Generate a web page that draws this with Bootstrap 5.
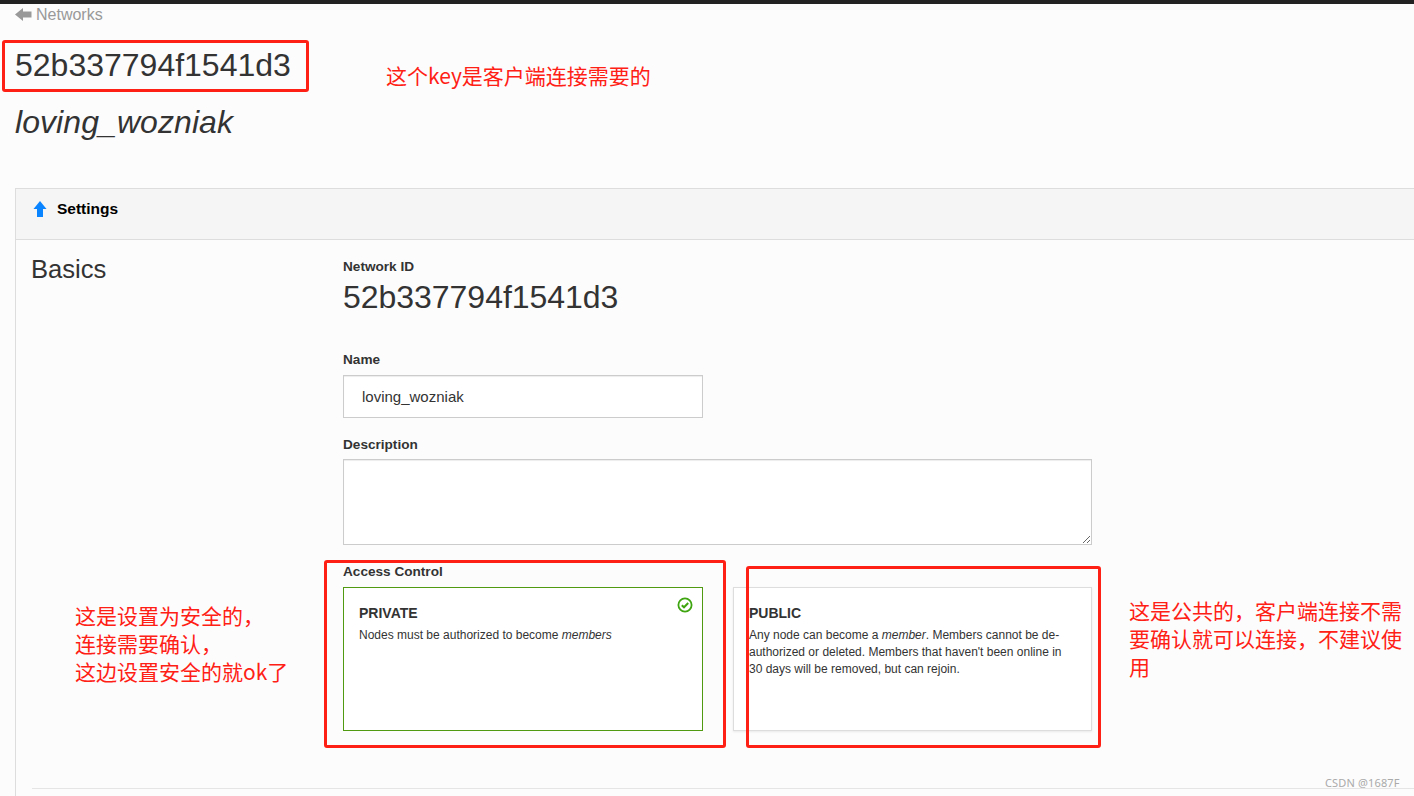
<!DOCTYPE html>
<html lang="en">
<head>
<meta charset="utf-8">
<title>Network</title>
<link rel="stylesheet" href="https://cdn.jsdelivr.net/npm/bootstrap@5.3.0/dist/css/bootstrap.min.css">
<style>
html,body{height:796px;overflow:hidden}
body{background:#fcfcfc;color:#333;font-family:"Liberation Sans",Arial,sans-serif;font-size:14px;line-height:1.42857;position:relative}
.topline{height:4px;background:#222}
.page-wrap{padding:0 0 0 15px}
.back-link{color:#999;font-size:16px;line-height:20px;height:20px;text-decoration:none;gap:4px}
.back-link span{padding-top:2px}
.net-id{font-size:32px;line-height:36px;font-weight:400;margin:23px 0 0}
.net-name{font-size:32px;line-height:36px;font-weight:400;font-style:italic;margin:21px 0 48px;letter-spacing:.07px}
.panel-box{width:1500px;border:1px solid #ddd;border-radius:0;background:transparent;height:700px}
.panel-head{height:51px;background:#f5f5f5;border-bottom:1px solid #ddd;padding:0 17px 10px;gap:10px;font-weight:700;font-size:15.5px;color:#000;border-radius:0}
.basics-title{font-size:25.6px;line-height:26px;font-weight:400;width:312px;flex:none;margin:16px 0 0;color:#333}
.panel-main{padding:0 0 0 15px}
.field-lbl{font-weight:700;font-size:13.6px;line-height:20px;height:20px;padding-top:1px;margin:0;display:block}
.lbl-id{margin-top:16px}
.id-big{font-size:32px;line-height:36px;margin:3px 0 0;letter-spacing:-.03px}
.lbl-name{margin-top:34px}
.name-input{width:360px;height:43px;border:1px solid #ccc;border-radius:0;margin-top:6px;padding:0 18px;font-size:15px;color:#333;font-family:inherit;box-shadow:inset 0 1px 1px rgba(0,0,0,.075)}
.lbl-desc{margin-top:16px}
.desc-input{width:749px;height:86px;border:1px solid #ccc;border-radius:0;margin-top:5px;display:block;box-shadow:inset 0 1px 1px rgba(0,0,0,.075)}
.lbl-access{margin-top:16px;margin-bottom:6px}
.access-row{gap:30px}
.access-card{height:144px;background:#fff;border-radius:0;padding:15px;position:relative;font-size:12px;line-height:17px;color:#333}
.access-private{width:360px;border:1px solid #4f9a10}
.access-public{width:359px;border:1px solid #ddd;box-shadow:0 1px 2px rgba(0,0,0,.08)}
.access-title{font-size:14px;font-weight:700;line-height:20px;margin:0 0 4px;color:#333}
.check-mark{position:absolute;top:9px;right:9px}
.divider-line{border-top:1px solid #e5e5e5;margin:57px 0 0 0;width:1500px}
.red-box{position:absolute;border:3px solid #ff2015;border-radius:3px;pointer-events:none}
.rb-a{left:2px;top:40px;width:307px;height:52px}
.rb-b{left:324px;top:560px;width:402px;height:188px}
.rb-c{left:746px;top:566px;width:355px;height:182px}
.note-text{position:absolute;color:#ff2015;font-family:"Noto Sans CJK SC","Liberation Sans",sans-serif;font-size:21px;line-height:28px;margin:0}
.note-a{left:386px;top:61px;white-space:nowrap}
.note-b{left:75px;top:601px;white-space:nowrap}
.note-c{left:1129px;top:596px;width:275px}
.mark-csdn{position:absolute;left:1325px;top:776px;font-size:11px;line-height:14px;color:#aaa;letter-spacing:.15px;font-family:"Noto Sans","Liberation Sans",sans-serif}
</style>
</head>
<body>
<div class="topline"></div>
<div class="page-wrap">
  <a href="#" class="back-link d-flex align-items-center">
    <svg width="17" height="13" viewBox="0 0 17 13" aria-hidden="true"><path d="M8 0V3.5H16.5V9.5H8V13L0 6.5Z" fill="#999"/></svg>
    <span>Networks</span>
  </a>
  <h1 class="net-id">52b337794f1541d3</h1>
  <h2 class="net-name">loving_wozniak</h2>
  <div class="panel-box">
    <div class="panel-head d-flex align-items-center">
      <svg width="14" height="16" viewBox="0 0 14 16" aria-hidden="true"><path d="M7 0L13.5 8H10V16H4V8H.5Z" fill="#0a84ff"/></svg>
      <span>Settings</span>
    </div>
    <div class="panel-main d-flex">
      <h3 class="basics-title">Basics</h3>
      <div>
        <label class="field-lbl lbl-id">Network ID</label>
        <div class="id-big">52b337794f1541d3</div>
        <label class="field-lbl lbl-name" for="nm">Name</label>
        <input id="nm" class="name-input d-block" value="loving_wozniak">
        <label class="field-lbl lbl-desc" for="ds">Description</label>
        <textarea id="ds" class="desc-input"></textarea>
        <label class="field-lbl lbl-access">Access Control</label>
        <div class="access-row d-flex">
          <div class="access-card access-private">
            <svg class="check-mark" width="16" height="16" viewBox="0 0 16 16" aria-hidden="true"><circle cx="8" cy="8" r="6.6" fill="none" stroke="#3fa510" stroke-width="1.8"/><path d="M4.8 8.2L7 10.3L11.2 6" fill="none" stroke="#3fa510" stroke-width="2"/></svg>
            <div class="access-title">PRIVATE</div>
            <div>Nodes must be authorized to become <em>members</em></div>
          </div>
          <div class="access-card access-public">
            <div class="access-title">PUBLIC</div>
            <div>Any node can become a <em>member</em>. Members cannot be de-authorized or deleted. Members that haven't been online in 30 days will be removed, but can rejoin.</div>
          </div>
        </div>
      </div>
    </div>
    <div class="divider-line ms-3"></div>
  </div>
</div>
<div class="red-box rb-a"></div>
<div class="red-box rb-b"></div>
<div class="red-box rb-c"></div>
<p class="note-text note-a">这个key是客户端连接需要的</p>
<p class="note-text note-b">这是设置为安全的，<br>连接需要确认，<br>这边设置安全的就ok了</p>
<p class="note-text note-c">这是公共的，客户端连接不需要确认就可以连接，不建议使用</p>
<div class="mark-csdn">CSDN @1687F</div>
<script src="https://cdn.jsdelivr.net/npm/bootstrap@5.3.0/dist/js/bootstrap.bundle.min.js"></script>
</body>
</html>
